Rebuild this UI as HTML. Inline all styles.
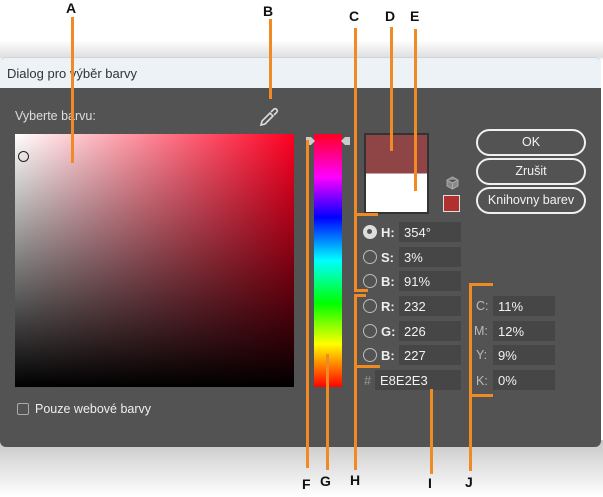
<!DOCTYPE html>
<html><head><meta charset="utf-8"><style>
*{margin:0;padding:0;box-sizing:border-box}
body{width:603px;height:497px;overflow:hidden;background:#fff;font-family:"Liberation Sans",sans-serif;position:relative}
.a{position:absolute}
.bg{left:0;top:40px;width:603px;height:457px;background:linear-gradient(#fff 0,#e0e0e0 17px,#fff 20px)}
.shadow{left:0;top:440px;width:603px;height:57px;background:linear-gradient(#c8c8c8,#fff)}
.title{left:0;top:57px;width:601px;height:31px;background:#edf2f6;border-top:1px solid #d0d4d8;border-radius:6px 6px 0 0;font-size:13px;color:#333;padding:8px 0 0 7px}
.body{left:0;top:88px;width:601px;height:359px;background:#535353;border-radius:0 0 6px 6px}
.t{color:#ddd;font-size:12.5px}
.field{left:15px;top:134px;width:279px;height:253px;background:linear-gradient(to bottom,rgba(0,0,0,0),#000),linear-gradient(to right,#fff,#ff0022)}
.hue{left:314px;top:134px;width:28px;height:253px;background:linear-gradient(#ff0020,#ff00ff 17%,#0000ff 33%,#00ffff 50%,#00ff00 67%,#ffff00 83%,#ff0000)}
.sw{left:364px;top:133px;width:65px;height:81px;border:2px solid #333;background:linear-gradient(#8f4446 50%,#fff 50%)}
.btn{left:476px;width:110px;height:27px;border:2px solid #f0f0f0;border-radius:14px;color:#f2f2f2;font-size:12.5px;text-align:center;line-height:23px}
.rad{width:14px;height:14px;border:1.5px solid #bbb;border-radius:50%}
.lbl{color:#eee;font-size:13px;font-weight:bold}
.in{height:20px;background:#464646;color:#f2f2f2;font-size:13px;padding:3px 0 0 5px}
.o{background:#f08a24}
.L{font-weight:bold;font-size:14px;color:#111}
</style></head><body>
<div class="a bg"></div><div class="a shadow"></div>
<div class="a title">Dialog pro výběr barvy</div>
<div class="a body"></div>
<div class="a t" style="left:15px;top:109px">Vyberte barvu:</div>
<svg class="a" style="left:258px;top:106px" width="22" height="22" viewBox="0 0 22 22"><path d="M3 19 L4 15 L12 7 L15 10 L7 18 Z M13 6 L16 3 Q18 2 19 4 Q20 5 18 7 L16 9" fill="none" stroke="#ddd" stroke-width="1.6"/></svg>
<div class="a field"></div>
<div class="a" style="left:18px;top:151px;width:11px;height:11px;border:1.5px solid #222;border-radius:50%"></div>
<div class="a hue"></div>
<svg class="a" style="left:304px;top:135px" width="48" height="12"><path d="M2 2h5l4 4-4 4H2z M46 2h-5l-4 4 4 4h5z" fill="#ccc"/></svg>
<div class="a sw"></div>
<svg class="a" style="left:446px;top:176px" width="13" height="14"><path d="M6.5 1 L12 4 V10 L6.5 13 L1 10 V4 Z M1 4 L6.5 7 L12 4 M6.5 7 V13" fill="#888" stroke="#aaa"/></svg>
<div class="a" style="left:443px;top:195px;width:17px;height:17px;background:#b03030;border:1px solid #ddd"></div>
<div class="a btn" style="top:129px">OK</div>
<div class="a btn" style="top:158px">Zrušit</div>
<div class="a btn" style="top:187px">Knihovny barev</div>

<div class="a rad" style="left:363px;top:225px;background:#ddd;border-color:#ddd"><div style="width:5px;height:5px;background:#555;border-radius:50%;margin:3px"></div></div>
<div class="a lbl" style="left:381px;top:225px">H:</div><div class="a in" style="left:399px;top:222px;width:62px">354°</div>
<div class="a rad" style="left:363px;top:250px"></div><div class="a lbl" style="left:381px;top:250px">S:</div><div class="a in" style="left:399px;top:247px;width:62px">3%</div>
<div class="a rad" style="left:363px;top:274px"></div><div class="a lbl" style="left:381px;top:274px">B:</div><div class="a in" style="left:399px;top:271px;width:62px">91%</div>
<div class="a rad" style="left:363px;top:299px"></div><div class="a lbl" style="left:381px;top:299px">R:</div><div class="a in" style="left:399px;top:296px;width:62px">232</div>
<div class="a rad" style="left:363px;top:324px"></div><div class="a lbl" style="left:381px;top:324px">G:</div><div class="a in" style="left:399px;top:321px;width:62px">226</div>
<div class="a rad" style="left:363px;top:348px"></div><div class="a lbl" style="left:381px;top:348px">B:</div><div class="a in" style="left:399px;top:345px;width:62px">227</div>
<div class="a t" style="left:364px;top:374px;color:#999">#</div><div class="a in" style="left:375px;top:370px;width:86px">E8E2E3</div>
<div class="a t" style="left:476px;top:299px;color:#bbb">C:</div><div class="a in" style="left:493px;top:296px;width:62px">11%</div>
<div class="a t" style="left:474px;top:324px;color:#bbb">M:</div><div class="a in" style="left:493px;top:321px;width:62px">12%</div>
<div class="a t" style="left:476px;top:348px;color:#bbb">Y:</div><div class="a in" style="left:493px;top:345px;width:62px">9%</div>
<div class="a t" style="left:476px;top:374px;color:#bbb">K:</div><div class="a in" style="left:493px;top:370px;width:62px">0%</div>
<div class="a" style="left:17px;top:403px;width:12px;height:12px;border:1px solid #aaa;border-radius:2px"></div>
<div class="a t" style="left:35px;top:402px;color:#eee">Pouze webové barvy</div>

<div class="a o" style="left:71px;top:17px;width:3px;height:146px"></div><div class="a L" style="left:66px;top:0">A</div>
<div class="a o" style="left:269px;top:19px;width:3px;height:80px"></div><div class="a L" style="left:263px;top:3px">B</div>
<div class="a o" style="left:354px;top:28px;width:3px;height:263px"></div><div class="a L" style="left:349px;top:8px">C</div>
<div class="a o" style="left:354px;top:213px;width:24px;height:3px"></div>
<div class="a o" style="left:354px;top:289px;width:14px;height:3px"></div>
<div class="a o" style="left:390px;top:27px;width:3px;height:124px"></div><div class="a L" style="left:385px;top:8px">D</div>
<div class="a o" style="left:414px;top:29px;width:3px;height:162px"></div><div class="a L" style="left:410px;top:8px">E</div>
<div class="a o" style="left:354px;top:294px;width:3px;height:176px"></div>
<div class="a o" style="left:354px;top:294px;width:12px;height:3px"></div>
<div class="a o" style="left:354px;top:365px;width:26px;height:3px"></div><div class="a L" style="left:350px;top:472px">H</div>
<div class="a o" style="left:306px;top:140px;width:3px;height:328px"></div><div class="a L" style="left:302px;top:476px">F</div>
<div class="a o" style="left:326px;top:354px;width:3px;height:116px"></div><div class="a L" style="left:320px;top:473px">G</div>
<div class="a o" style="left:430px;top:389px;width:3px;height:85px"></div><div class="a L" style="left:428px;top:475px">I</div>
<div class="a o" style="left:469px;top:283px;width:3px;height:188px"></div><div class="a L" style="left:465px;top:474px">J</div>
<div class="a o" style="left:469px;top:283px;width:24px;height:3px"></div>
<div class="a o" style="left:469px;top:394px;width:24px;height:3px"></div>
</body></html>
